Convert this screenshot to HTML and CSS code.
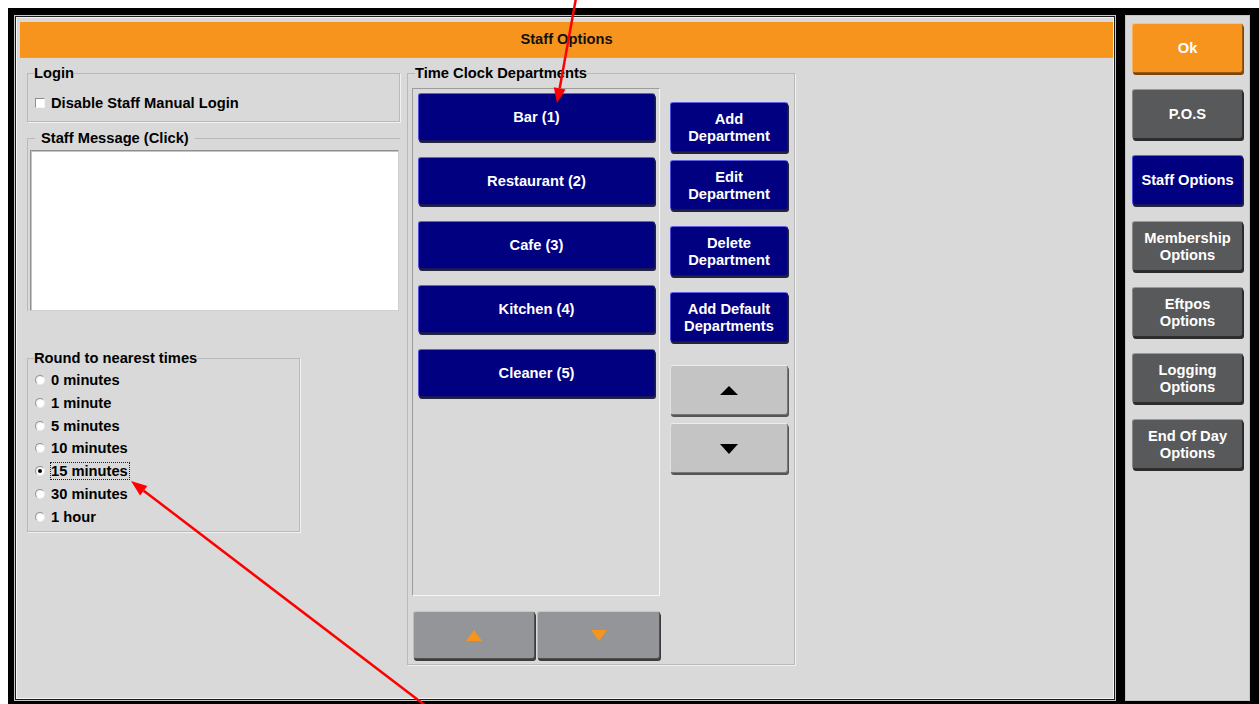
FILE: index.html
```html
<!DOCTYPE html>
<html lang="en">
<head>
<meta charset="utf-8">
<title>Staff Options</title>
<link rel="stylesheet" href="styles.css">
</head>
<body>
<div class="screen">
  <section class="window">
    <header class="titlebar">Staff Options</header>
    <div class="panes">
      <div class="col-left">
        <fieldset class="group group-login">
          <legend>Login</legend>
          <label class="check-row"><span class="checkbox"></span>Disable Staff Manual Login</label>
        </fieldset>

        <fieldset class="group group-message">
          <legend class="legend-spaced">Staff Message (Click)</legend>
          <div class="message-box"></div>
        </fieldset>

        <fieldset class="group group-round">
          <legend>Round to nearest times</legend>
          <ul class="radio-list">
            <li class="radio-row"><span class="radio"></span><span class="radio-label">0 minutes</span></li>
            <li class="radio-row"><span class="radio"></span><span class="radio-label">1 minute</span></li>
            <li class="radio-row"><span class="radio"></span><span class="radio-label">5 minutes</span></li>
            <li class="radio-row"><span class="radio"></span><span class="radio-label">10 minutes</span></li>
            <li class="radio-row"><span class="radio is-checked"></span><span class="radio-label is-focused">15 minutes</span></li>
            <li class="radio-row"><span class="radio"></span><span class="radio-label">30 minutes</span></li>
            <li class="radio-row"><span class="radio"></span><span class="radio-label">1 hour</span></li>
          </ul>
        </fieldset>
      </div>

      <fieldset class="group group-depts">
        <legend class="legend-depts">Time Clock Departments</legend>
        <div class="dept-body">
          <div class="dept-col">
            <div class="dept-list">
              <button class="btn btn-navy dept">Bar (1)</button>
              <button class="btn btn-navy dept">Restaurant (2)</button>
              <button class="btn btn-navy dept">Cafe (3)</button>
              <button class="btn btn-navy dept">Kitchen (4)</button>
              <button class="btn btn-navy dept">Cleaner (5)</button>
            </div>
            <div class="page-nav">
              <button class="btn btn-steel page-btn" aria-label="Previous page">
                <svg width="16" height="11" viewBox="0 0 16 11"><polygon points="8,0 16,11 0,11" fill="#f7941d"/></svg>
              </button>
              <button class="btn btn-steel page-btn" aria-label="Next page">
                <svg width="16" height="11" viewBox="0 0 16 11"><polygon points="0,0 16,0 8,11" fill="#f7941d"/></svg>
              </button>
            </div>
          </div>

          <div class="dept-actions">
            <button class="btn btn-navy action">Add<br>Department</button>
            <button class="btn btn-navy action tight">Edit<br>Department</button>
            <button class="btn btn-navy action">Delete<br>Department</button>
            <button class="btn btn-navy action">Add Default<br>Departments</button>
            <button class="btn btn-silver action spaced" aria-label="Move up">
              <svg width="18" height="9" viewBox="0 0 18 9"><polygon points="9,0 18,9 0,9" fill="#000"/></svg>
            </button>
            <button class="btn btn-silver action tight" aria-label="Move down">
              <svg width="18" height="10" viewBox="0 0 18 10"><polygon points="0,0 18,0 9,10" fill="#000"/></svg>
            </button>
          </div>
        </div>
      </fieldset>
    </div>
  </section>

  <nav class="sidebar">
    <button class="btn btn-orange side">Ok</button>
    <button class="btn btn-slate side">P.O.S</button>
    <button class="btn btn-navy side">Staff Options</button>
    <button class="btn btn-slate side">Membership<br>Options</button>
    <button class="btn btn-slate side">Eftpos<br>Options</button>
    <button class="btn btn-slate side">Logging<br>Options</button>
    <button class="btn btn-slate side">End Of Day<br>Options</button>
  </nav>
</div>

<svg class="callouts" width="1259" height="704" viewBox="0 0 1259 704">
  <line x1="576" y1="-2" x2="559.7" y2="88.3" stroke="#f00" stroke-width="2.5"/>
  <polygon points="557,103 565.6,89.4 553.8,87.2" fill="#f00"/>
  <line x1="426" y1="706" x2="143.7" y2="490.7" stroke="#f00" stroke-width="2.5"/>
  <polygon points="131,481 147.3,485.9 140.1,495.5" fill="#f00"/>
</svg>
</body>
</html>
```

FILE: styles.css
```css
* {
  box-sizing: border-box;
}

html,
body {
  margin: 0;
  background: #fff;
}

body {
  position: relative;
  width: 1259px;
  height: 704px;
  overflow: hidden;
  font-family: "Liberation Sans", Arial, sans-serif;
  font-size: 14.7px;
  font-weight: bold;
  color: #000;
}

/* Outer black frame holding the window and the navigation column */
.screen {
  display: flex;
  gap: 9px;
  width: 1251px;
  height: 696px;
  margin: 8px 0 0 8px;
  padding: 7px 9px 3px 6px;
  background: #000;
}

.window {
  display: flex;
  flex-direction: column;
  width: 1102px;
  height: 100%;
  padding: 6px 2px 0 5px;
  background: #d9d9d9;
  border: 1px solid #c8c8c8;
  box-shadow: inset 0 0 0 1px #1a1a1a, inset 0 0 0 2px #f4f4f4;
}

.titlebar {
  height: 36px;
  line-height: 35px;
  text-align: center;
  background: #f7941e;
  border-bottom: 1px solid #b9a68c;
  color: #111;
}

.panes {
  display: flex;
  align-items: flex-start;
  gap: 7px;
  padding: 7px 0 0 7px;
}

.col-left {
  display: flex;
  flex-direction: column;
  width: 373px;
}

/* Etched group boxes */
.group {
  margin: 0;
  padding: 0;
  min-width: 0;
  border: 1px solid #b9b9b9;
  box-shadow: 1px 1px 0 #f2f2f2;
}

.group legend {
  margin-left: 6px;
  padding: 0;
  line-height: 16px;
}

.group legend.legend-spaced {
  margin-left: 5px;
  padding: 0 6px;
}

.group legend.legend-depts {
  margin-left: 7px;
}

.group-login {
  height: 57px;
}

.check-row {
  display: flex;
  align-items: center;
  gap: 6px;
  height: 16px;
  margin-top: 14px;
  padding-left: 7px;
}

.checkbox {
  width: 10px;
  height: 10px;
  background: #fff;
  border: 1px solid;
  border-color: #8c8c8c #f6f6f6 #f6f6f6 #8c8c8c;
}

.group-message {
  margin-top: 8px;
  padding: 0 0 0 2px;
  border-bottom: none;
  border-right: none;
  box-shadow: none;
}

.message-box {
  width: 369px;
  height: 161px;
  margin-top: 4px;
  background: #fff;
  border: 1px solid;
  border-color: #8f8f8f #cfcfcf #cfcfcf #8f8f8f;
  box-shadow: inset 1px 1px 0 #c4c4c4;
}

.group-round {
  width: 273px;
  height: 182px;
  margin-top: 39px;
}

.radio-list {
  list-style: none;
  margin: 2.6px 0 0;
  padding: 0 0 0 7px;
}

.radio-row {
  display: flex;
  align-items: center;
  gap: 6px;
  height: 22.8px;
}

.radio {
  position: relative;
  width: 10px;
  height: 10px;
  border-radius: 50%;
  background: radial-gradient(circle at 60% 60%, #fff 40%, #dedede 100%);
  border: 1px solid;
  border-color: #969696 #eeeeee #eeeeee #969696;
}

.radio.is-checked::after {
  content: "";
  position: absolute;
  left: 2px;
  top: 2px;
  width: 4px;
  height: 4px;
  border-radius: 50%;
  background: #000;
}

.radio-label {
  line-height: 16px;
}

.radio-label.is-focused {
  margin-left: -1px;
  padding-right: 1px;
  border: 1px dotted #222;
}

/* Department group */
.group-depts {
  width: 388px;
  height: 600px;
}

.dept-body {
  display: flex;
  align-items: flex-start;
  padding: 7px 0 0 4px;
}

.dept-col {
  width: 248px;
}

.dept-list {
  display: flex;
  flex-direction: column;
  gap: 16px;
  height: 508px;
  padding: 4px 4px 0 5px;
  border: 1px solid;
  border-color: #9d9d9d #f6f6f6 #f6f6f6 #9d9d9d;
}

.page-nav {
  display: flex;
  gap: 2px;
  margin-top: 15px;
  padding-left: 1px;
}

.dept-actions {
  display: flex;
  flex-direction: column;
  gap: 16px;
  width: 118px;
  margin-left: 10px;
  padding-top: 14px;
}

.dept-actions .tight {
  margin-top: -8px;
}

.dept-actions .spaced {
  margin-top: 7px;
}

/* Bevelled touch buttons */
.btn {
  display: flex;
  align-items: center;
  justify-content: center;
  margin: 0;
  padding: 1px 0 0;
  font: inherit;
  line-height: 17px;
  text-align: center;
  color: #fff;
  border: 1px solid;
  border-radius: 3px;
  box-shadow: 1px 2px 0 #2b2b2b;
}

.btn-navy {
  background: #000080;
  border-color: #6262e4 #14145a #14145a #4c4cd6;
  box-shadow: 1px 2px 0 #23233c;
}

.btn-slate {
  background: #58595b;
  border-color: #9a9a9a #2e2e2e #2e2e2e #858585;
}

.btn-orange {
  background: #f7941e;
  border-color: #fcc27a #9a5a10 #9a5a10 #f9b35c;
  box-shadow: 1px 2px 0 #7a4510;
}

.btn-silver {
  background: #c4c4c4;
  border-color: #ececec #777 #777 #e2e2e2;
  box-shadow: 1px 2px 0 #555;
}

.btn-steel {
  background: #939598;
  border-color: #c6c6c6 #505050 #505050 #bdbdbd;
  box-shadow: 1px 2px 0 #3c3c3c;
}

.dept {
  width: 237px;
  height: 48px;
  flex: none;
}

.page-btn {
  width: 122px;
  height: 48px;
}

.page-btn + .page-btn {
  width: 123px;
}

.action {
  width: 118px;
  height: 50px;
  flex: none;
}

/* Right-hand navigation column */
.sidebar {
  display: flex;
  flex-direction: column;
  gap: 16px;
  width: 125px;
  height: 100%;
  padding: 7px 0 0 6px;
  background: #d9d9d9;
  border: 1px solid #c4c4c4;
}

.side {
  width: 111px;
  height: 50px;
  flex: none;
}

/* Red annotation arrows drawn over the screen */
.callouts {
  position: absolute;
  left: 0;
  top: 0;
  pointer-events: none;
}
```
